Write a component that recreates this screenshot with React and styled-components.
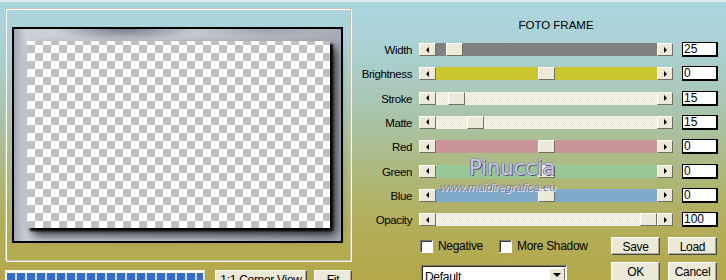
import React from "react";
import styled, { createGlobalStyle } from "styled-components";

const GlobalStyle = createGlobalStyle`
  html, body {
    margin: 0;
    padding: 0;
    overflow: hidden;
  }
  body {
    font-family: "Liberation Sans", Arial, sans-serif;
    font-size: 11px;
    letter-spacing: -0.3px;
    color: #000;
  }
`;

const Window = styled.div`
  position: relative;
  width: 726px;
  height: 280px;
  overflow: hidden;
  display: flex;
  box-sizing: border-box;
  border-top: 2px solid #dcecf0;
  background: linear-gradient(
    180deg,
    #acd6e0 0%,
    #aad0d2 18%,
    #a9c3a8 42%,
    #adb97f 60%,
    #b3ad5a 80%,
    #b5a84a 100%
  );
`;

/* ---------- left: preview ---------- */

const LeftPane = styled.div`
  width: 357px;
  flex-shrink: 0;
  padding: 6px 0 0 5px;
  box-sizing: border-box;
`;

const GroupBox = styled.div`
  width: 346px;
  height: 253px;
  box-sizing: border-box;
  border: 1px solid #c9c4ae;
  box-shadow: inset 1px 1px 0 #ffffff, 1px 1px 0 #f4f4ee;
  padding: 18px 0 0 6px;
`;

const PreviewFrame = styled.div`
  width: 331px;
  height: 216px;
  box-sizing: border-box;
  border: 2px solid #000;
  padding: 12px 11px 13px 13px;
  background:
    radial-gradient(ellipse 70px 12px at 110px 0, rgba(110, 116, 130, 0.9), transparent),
    radial-gradient(ellipse 60px 10px at 250px 0, rgba(150, 156, 168, 0.7), transparent),
    linear-gradient(90deg, #a0a6b2 0, #cdd1d9 12px, #c2c6ce 55%, #a8acb6 100%);
`;

const Checker = styled.div`
  width: 100%;
  height: 100%;
  background: repeating-conic-gradient(#c0c0c0 0 25%, #ffffff 0 50%) 0 -4px / 16px 16px;
  box-shadow: 3px 3px 2px rgba(0, 0, 0, 0.95), 6px 7px 10px rgba(10, 10, 20, 0.85);
`;

const BottomBar = styled.div`
  display: flex;
  align-items: flex-start;
  margin-top: 9px;
`;

const Progress = styled.div`
  width: 200px;
  height: 20px;
  box-sizing: border-box;
  border: 1px solid;
  border-color: #f4f4f0 #d8d8d0 #d8d8d0 #f4f4f0;
  padding: 2px 1px;
  background: #ffffff;
`;

const ProgressFill = styled.div`
  width: 100%;
  height: 100%;
  background: repeating-linear-gradient(90deg, #346ccb 0 8px, #c8d6ee 8px 10px);
`;

/* ---------- shared win-classic parts ---------- */

const Button = styled.div`
  width: ${(p) => p.$w}px;
  height: ${(p) => p.$h || 18}px;
  margin-left: ${(p) => p.$ml || 0}px;
  box-sizing: border-box;
  flex-shrink: 0;
  display: flex;
  align-items: center;
  justify-content: center;
  background: #ece9d8;
  border: 1px solid;
  border-color: #ffffff #4a4a44 #4a4a44 #ffffff;
  box-shadow: inset -1px -1px 0 #aca899;
  font-size: 12px;
  letter-spacing: -0.3px;
  padding-top: 1px;
`;

/* ---------- right: controls ---------- */

const RightPane = styled.div`
  flex: 1;
  padding-top: 17px;
  display: flex;
  flex-direction: column;
`;

const Title = styled.div`
  width: 254px;
  margin-left: 62px;
  height: 12px;
  line-height: 12px;
  text-align: center;
  letter-spacing: 0;
  padding-left: 10px;
  font-size: 11.5px;
`;

const Rows = styled.div`
  margin-top: 6.4px;
  display: flex;
  flex-direction: column;
`;

const Row = styled.div`
  display: flex;
  align-items: center;
  height: 24.3px;
`;

const Label = styled.div`
  width: 55px;
  margin-right: 7px;
  text-align: right;
  padding-top: 1px;
  font-size: 11.5px;
  letter-spacing: -0.4px;
`;

const Slider = styled.div`
  display: flex;
  width: 254px;
  height: 13px;
`;

const ArrowBtn = styled.div`
  width: ${(p) => p.$w}px;
  height: 13px;
  box-sizing: border-box;
  background: #ece9d8;
  border: 1px solid;
  border-color: #ffffff #716f64 #716f64 #ffffff;
  display: flex;
  align-items: center;
  justify-content: center;

  &::after {
    content: "";
    border-style: solid;
    border-width: ${(p) => (p.$dir === "left" ? "3px 3px 3px 0" : "3px 0 3px 3px")};
    border-color: ${(p) =>
      p.$dir === "left"
        ? "transparent #000 transparent transparent"
        : "transparent transparent transparent #000"};
  }
`;

const trackFills = {
  grey: "#808080",
  yellow: "#c9c52c",
  light: "repeating-conic-gradient(#fbfaf3 0 25%, #e5e1d0 0 50%) 0 0 / 2px 2px",
  red: "#c99598",
  green: "#98c898",
  blue: "#7fa8c9",
};

const Track = styled.div`
  position: relative;
  width: 221px;
  height: 13px;
  background: ${(p) => trackFills[p.$tone]};
`;

const Thumb = styled.div`
  position: absolute;
  top: 0;
  width: 17px;
  height: 13px;
  box-sizing: border-box;
  background: #ece9d8;
  border: 1px solid;
  border-color: #ffffff #716f64 #716f64 #ffffff;
`;

const ValueBox = styled.div`
  width: 36px;
  height: 15px;
  margin-left: 9px;
  box-sizing: border-box;
  background: #ffffff;
  border: 1px solid #000;
  border-right-width: 2px;
  border-bottom-width: 2px;
  font-size: 12px;
  letter-spacing: 0;
  line-height: 13px;
  padding-left: 1px;
`;

const OptionsRow = styled.div`
  display: flex;
  align-items: center;
  height: 17px;
  margin-top: 6px;
  padding: 0 9px 0 63px;
`;

const Check = styled.label`
  display: flex;
  align-items: center;
  gap: 5px;
  margin-left: ${(p) => p.$ml || 0}px;
  font-size: 12px;
  letter-spacing: -0.3px;
`;

const CheckBox = styled.span`
  width: 13px;
  height: 13px;
  box-sizing: border-box;
  background: #ffffff;
  border: 1px solid;
  border-color: #7a7868 #ffffff #ffffff #7a7868;
  box-shadow: inset 1px 1px 0 #3c3c3c;
`;

const Spacer = styled.div`
  flex: 1;
`;

const ActionRow = styled.div`
  display: flex;
  align-items: flex-start;
  margin-top: 7px;
  padding: 0 9px 0 64px;
`;

const Select = styled.div`
  width: 146px;
  height: 20px;
  margin-top: 3px;
  box-sizing: border-box;
  display: flex;
  background: #ffffff;
  border: 1px solid;
  border-color: #7a7868 #ffffff #ffffff #7a7868;
  box-shadow: inset 1px 1px 0 #2c2c2c;
  font-size: 12px;
`;

const SelectText = styled.div`
  flex: 1;
  padding: 4px 0 0 3px;
`;

const SelectArrow = styled.div`
  width: 14px;
  margin: 2px 1px 1px 0;
  background: #ece9d8;
  border: 1px solid;
  border-color: #ffffff #716f64 #716f64 #ffffff;
  display: flex;
  align-items: center;
  justify-content: center;

  &::after {
    content: "";
    border-style: solid;
    border-width: 4px 4px 0 4px;
    border-color: #000 transparent transparent transparent;
  }
`;

/* ---------- watermark overlay ---------- */

const MarkName = styled.div`
  position: absolute;
  left: 469px;
  top: 154px;
  font-family: "DejaVu Sans", sans-serif;
  font-size: 21px;
  letter-spacing: 0;
  color: #c4c6e4;
  text-shadow: 1px 1px 0 #5c5c70, -1px 0 0 #7e7e96, 0 -1px 0 #9a9ab0;
  pointer-events: none;
`;

const MarkUrl = styled.div`
  position: absolute;
  left: 440px;
  top: 179px;
  font-family: "Liberation Sans", sans-serif;
  font-style: italic;
  font-size: 11.5px;
  letter-spacing: 0;
  color: #7e7e9c;
  text-shadow: 1px 1px 0 #e4e4ee;
  pointer-events: none;
`;

const sliders = [
  { name: "Width", value: 25, tone: "grey", pos: 10 },
  { name: "Brightness", value: 0, tone: "yellow", pos: 102 },
  { name: "Stroke", value: 15, tone: "light", pos: 12 },
  { name: "Matte", value: 15, tone: "light", pos: 31 },
  { name: "Red", value: 0, tone: "red", pos: 102 },
  { name: "Green", value: 0, tone: "green", pos: 102 },
  { name: "Blue", value: 0, tone: "blue", pos: 102 },
  { name: "Opacity", value: 100, tone: "light", pos: 204 },
];

const App = () => {
  return (
    <Window>
      <GlobalStyle />
      <LeftPane>
        <GroupBox>
          <PreviewFrame>
            <Checker />
          </PreviewFrame>
        </GroupBox>
        <BottomBar>
          <Progress>
            <ProgressFill />
          </Progress>
          <Button $w={92} $ml={10}>1:1 Corner View</Button>
          <Button $w={38} $ml={7}>Fit</Button>
        </BottomBar>
      </LeftPane>

      <RightPane>
        <Title>FOTO FRAME</Title>
        <Rows>
          {sliders.map((s) => (
            <Row key={s.name}>
              <Label>{s.name}</Label>
              <Slider>
                <ArrowBtn $w={17} $dir="left" />
                <Track $tone={s.tone}>
                  <Thumb style={{ left: s.pos }} />
                </Track>
                <ArrowBtn $w={16} $dir="right" />
              </Slider>
              <ValueBox>{s.value}</ValueBox>
            </Row>
          ))}
        </Rows>
        <OptionsRow>
          <Check>
            <CheckBox />
            Negative
          </Check>
          <Check $ml={16}>
            <CheckBox />
            More Shadow
          </Check>
          <Spacer />
          <Button $w={49}>Save</Button>
          <Button $w={49} $ml={8}>Load</Button>
        </OptionsRow>
        <ActionRow>
          <Select>
            <SelectText>Default</SelectText>
            <SelectArrow />
          </Select>
          <Spacer />
          <Button $w={49} $h={20}>OK</Button>
          <Button $w={49} $h={20} $ml={8}>Cancel</Button>
        </ActionRow>
      </RightPane>

      <MarkName>Pinuccia</MarkName>
      <MarkUrl>www.maidiregrafica.eu</MarkUrl>
    </Window>
  );
};

export default App;
